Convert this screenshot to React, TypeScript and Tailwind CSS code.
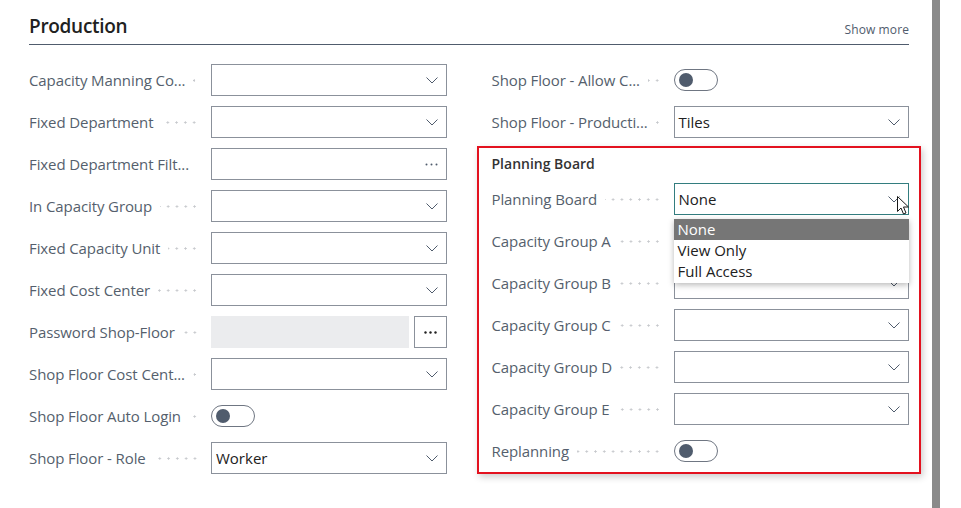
import React from "react";

const Chevron = () => (
  <svg width="12" height="7" viewBox="0 0 12 7" className="shrink-0">
    <polyline points="0.5,0.5 6,6 11.5,0.5" fill="none" stroke="#505c6d" strokeWidth="1" />
  </svg>
);

const Dots = ({ dark }: { dark?: boolean }) => (
  <svg width="13" height="3" viewBox="0 0 13 3" className="shrink-0">
    <circle cx="1.5" cy="1.5" r={dark ? 1.2 : 1} fill={dark ? "#212121" : "#505c6d"} />
    <circle cx="6.5" cy="1.5" r={dark ? 1.2 : 1} fill={dark ? "#212121" : "#505c6d"} />
    <circle cx="11.5" cy="1.5" r={dark ? 1.2 : 1} fill={dark ? "#212121" : "#505c6d"} />
  </svg>
);

const Label = ({ text }: { text: string }) => (
  <div className="w-[182px] shrink-0 pr-[12px] flex items-center">
    <span className="whitespace-nowrap text-[15px] tracking-[-0.1px] text-[#555f6d]">{text}</span>
    <div className="flex-1 min-w-0 ml-[8px] h-[3px] bg-[radial-gradient(circle,#c6c8cc_0.9px,transparent_1.3px)] bg-[length:8.8px_3px] bg-repeat-x bg-right" />
  </div>
);

const Select = ({ value }: { value?: string }) => (
  <div className="flex-1 h-[32px] border border-[#8b919b] bg-white flex items-center justify-between pl-[4px] pr-[8px]">
    <span className="text-[15px] text-[#212121]">{value}</span>
    <Chevron />
  </div>
);

const Toggle = () => (
  <div className="w-[44px] h-[22px] rounded-full border border-[#6f7682] flex items-center px-[4px]">
    <div className="w-[14px] h-[14px] rounded-full bg-[#505c6d]" />
  </div>
);

const Row = ({ label, children }: { label: string; children: React.ReactNode }) => (
  <div className="h-[42px] flex items-center">
    <Label text={label} />
    {children}
  </div>
);

export default function App() {
  return (
    <div className="w-[961px] h-[508px] bg-white overflow-hidden flex font-['Open_Sans',sans-serif]">
      <div className="w-[909px] pl-[29px] shrink-0">
        <div className="pt-[12px] pb-[4px] border-b border-[#505c6d] flex justify-between items-center">
          <h1 className="text-[19px] leading-[28px] tracking-[-0.3px] font-semibold text-[#212121]">Production</h1>
          <span className="pt-[8px] text-[12px] tracking-[0.1px] text-[#505c6d]">Show more</span>
        </div>

        <div className="mt-[14px] grid grid-cols-2 gap-x-[45px]">
          <div>
            <Row label="Capacity Manning Co..."><Select /></Row>
            <Row label="Fixed Department"><Select /></Row>
            <Row label="Fixed Department Filt...">
              <div className="flex-1 h-[32px] border border-[#8b919b] flex items-center justify-end pr-[8px]">
                <Dots />
              </div>
            </Row>
            <Row label="In Capacity Group"><Select /></Row>
            <Row label="Fixed Capacity Unit"><Select /></Row>
            <Row label="Fixed Cost Center"><Select /></Row>
            <Row label="Password Shop-Floor">
              <div className="flex-1 flex gap-[5px]">
                <div className="flex-1 h-[32px] bg-[#ebecee]" />
                <div className="w-[33px] h-[32px] border border-[#8b919b] flex items-center justify-center">
                  <Dots dark />
                </div>
              </div>
            </Row>
            <Row label="Shop Floor Cost Cent..."><Select /></Row>
            <Row label="Shop Floor Auto Login"><Toggle /></Row>
            <Row label="Shop Floor - Role"><Select value="Worker" /></Row>
          </div>

          <div>
            <Row label="Shop Floor - Allow C..."><Toggle /></Row>
            <Row label="Shop Floor - Producti..."><Select value="Tiles" /></Row>

            <div className="mt-[3px] -ml-[15px] -mr-[12px] pl-[13px] pr-[10px] border-2 border-[#e3121f] shadow-[2px_3px_7px_rgba(0,0,0,0.2)]">
              <div className="h-[30px] flex items-center text-[14px] font-semibold text-[#333333]">Planning Board</div>
              <Row label="Planning Board">
                <div className="flex-1 relative">
                  <div className="h-[32px] border border-[#337d7f] bg-white flex items-center justify-between pl-[4px] pr-[8px]">
                    <span className="text-[15px] text-[#212121]">None</span>
                    <Chevron />
                  </div>
                  <svg width="13" height="20" viewBox="0 0 13 20" className="absolute left-[223px] top-[13px]">
                    <path d="M0.5 0.5 L0.5 15.5 L4 12 L6.5 18 L9 17 L6.5 11 L11.5 11 Z" fill="#ffffff" stroke="#1a1a1a" strokeWidth="1" />
                  </svg>
                  <div className="absolute z-10 left-0 right-0 top-[36px] bg-white shadow-[0_2px_6px_rgba(0,0,0,0.28)] text-[15px] text-[#212121]">
                    <div className="h-[21px] leading-[21px] px-[4px] bg-[#767676] text-white">None</div>
                    <div className="h-[21px] leading-[21px] px-[4px]">View Only</div>
                    <div className="h-[22px] leading-[21px] px-[4px]">Full Access</div>
                  </div>
                </div>
              </Row>
              <Row label="Capacity Group A"><Select /></Row>
              <Row label="Capacity Group B"><Select /></Row>
              <Row label="Capacity Group C"><Select /></Row>
              <Row label="Capacity Group D"><Select /></Row>
              <Row label="Capacity Group E"><Select /></Row>
              <Row label="Replanning"><Toggle /></Row>
            </div>
          </div>
        </div>
      </div>
      <div className="ml-[23px] w-[8px] h-full bg-[#8a8a8a]" />
    </div>
  );
}
